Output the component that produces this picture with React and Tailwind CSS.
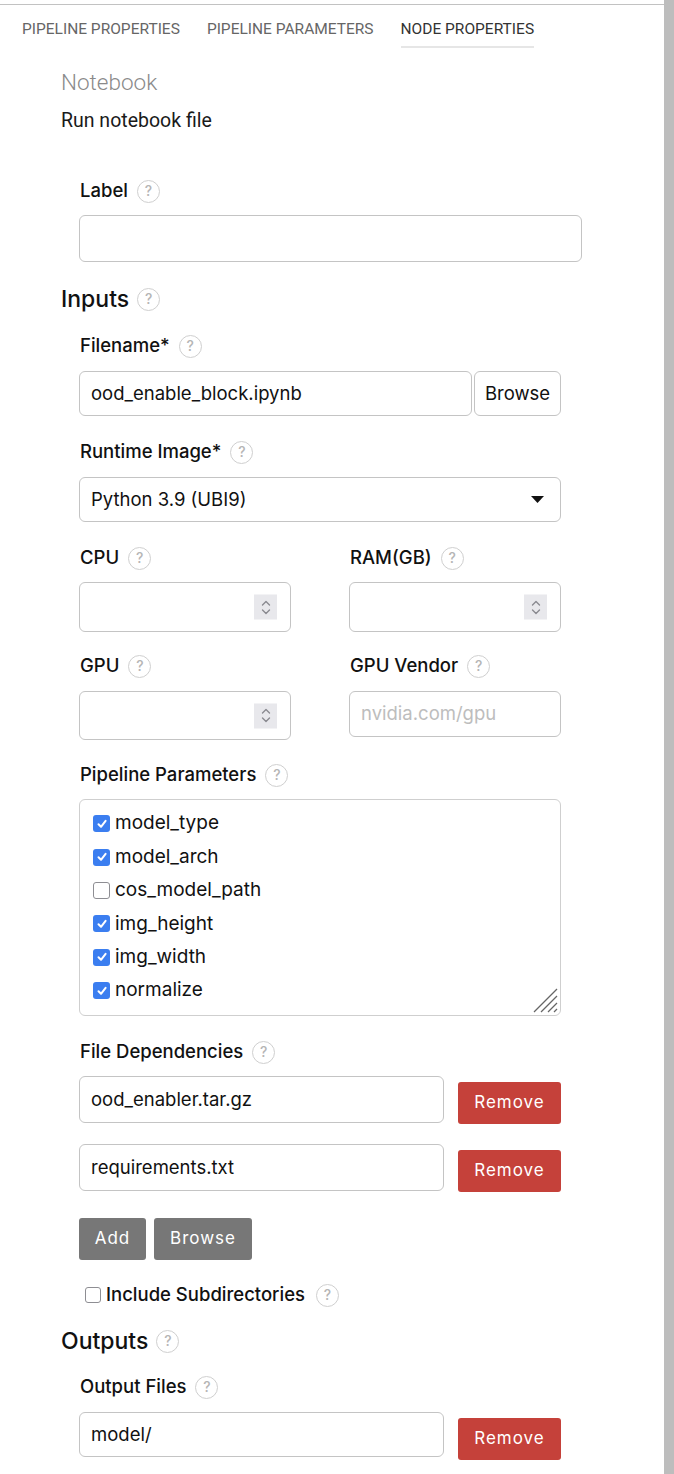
import React from "react";

const sf = { fontFamily: "Inter, 'Noto Sans', sans-serif" };

function Help({ className = "" }) {
  return (
    <span
      className={`inline-flex items-center justify-center w-[23px] h-[23px] rounded-full border border-[#cfcfcf] text-[#b5b5b5] text-[14px] leading-none ${className}`}
      style={sf}
    >
      ?
    </span>
  );
}

function Label({ children, className = "" }) {
  return (
    <div className={`flex items-center h-[24px] text-[18.5px] font-medium text-[#111] ${className}`} style={sf}>
      <span>{children}</span>
      <Help className="ml-[9px]" />
    </div>
  );
}

function Spinner() {
  return (
    <span className="absolute right-[13px] top-1/2 -translate-y-1/2 w-[23px] h-[25px] bg-[#e8e8ec] flex items-center justify-center">
      <svg width="12" height="18" viewBox="0 0 12 18" fill="none" stroke="#8a8a90" strokeWidth="1.4" strokeLinecap="round" strokeLinejoin="round">
        <path d="M2.5 6.5 L6 3 L9.5 6.5" />
        <path d="M2.5 11.5 L6 15 L9.5 11.5" />
      </svg>
    </span>
  );
}

function NumInput({ h = "h-[50px]" }) {
  return <div className={`relative w-[212px] ${h} rounded-[6px] border border-[#c4c4c4] bg-white`}><Spinner /></div>;
}

function TextBox({ value, className = "" }) {
  return (
    <div
      className={`flex items-center px-[11px] rounded-[6px] border border-[#c4c4c4] bg-white text-[18.5px] text-[#111] ${className}`}
      style={sf}
    >
      {value}
    </div>
  );
}

function RedBtn() {
  return (
    <div
      className="w-[103px] h-[42px] rounded-[3px] bg-[#c5413a] text-white text-[17px] tracking-[1px] flex items-center justify-center"
      style={sf}
    >
      Remove
    </div>
  );
}

function Check({ checked }) {
  if (checked) {
    return (
      <span className="w-[17px] h-[17px] rounded-[3px] bg-[#3b7ef0] flex items-center justify-center shrink-0">
        <svg width="12" height="12" viewBox="0 0 12 12" fill="none" stroke="white" strokeWidth="2" strokeLinecap="round" strokeLinejoin="round">
          <path d="M2.5 6.3 L5 8.8 L9.6 2.8" />
        </svg>
      </span>
    );
  }
  return <span className="w-[17px] h-[17px] rounded-[3px] border-[1.5px] border-[#8e8e93] bg-white shrink-0" />;
}

const params = [
  ["model_type", true],
  ["model_arch", true],
  ["cos_model_path", false],
  ["img_height", true],
  ["img_width", true],
  ["normalize", true],
];

export default function App() {
  return (
    <div className="w-[674px] h-[1474px] flex bg-white overflow-hidden">
      <div className="w-[664px] h-full">
        <div className="mt-[4px] border-t border-[#c2c2c2]" />
        {/* tabs */}
        <div className="flex gap-[27px] pl-[22px] pt-[14px] text-[15.5px] leading-[20px]" style={{ fontFamily: "Roboto, sans-serif" }}>
          <div className="pb-[9px] text-[#666]">PIPELINE PROPERTIES</div>
          <div className="pb-[9px] text-[#666]">PIPELINE PARAMETERS</div>
          <div className="pb-[7px] border-b-2 border-[#e6e6e6] text-[#333]">NODE PROPERTIES</div>
        </div>

        <div className="pl-[61px]">
          <div className="mt-[20px] text-[22.5px] leading-[28px] font-light text-[#8a8a8a]" style={{ fontFamily: "Roboto, sans-serif" }}>
            Notebook
          </div>
          <div className="mt-[13px] text-[19.5px] leading-[24px] text-[#1a1a1a]" style={{ fontFamily: "Roboto, sans-serif" }}>
            Run notebook file
          </div>

          <div className="pl-[19px] mt-[46px]">
            <Label>Label</Label>
          </div>
          <div className="pl-[18px] mt-[12px]">
            <TextBox value="" className="w-[503px] h-[47px]" />
          </div>

          <div className="mt-[23px] flex items-center h-[28px] text-[23px] font-medium text-[#111]" style={sf}>
            <span>Inputs</span>
            <Help className="ml-[8px]" />
          </div>

          <div className="pl-[18px]">
            <div className="pl-[1px] mt-[21px]">
              <Label>Filename*</Label>
            </div>
            <div className="mt-[13px] flex w-[482px] h-[45px]">
              <TextBox value="ood_enable_block.ipynb" className="flex-1 h-full" />
              <div className="ml-[2px] w-[87px] h-full rounded-[6px] border border-[#c4c4c4] flex items-center justify-center text-[18.5px] text-[#111]" style={sf}>
                Browse
              </div>
            </div>

            <div className="pl-[1px] mt-[24px]">
              <Label>Runtime Image*</Label>
            </div>
            <div className="mt-[13px] w-[482px] h-[45px] rounded-[6px] border border-[#c4c4c4] flex items-center justify-between pl-[11px] pr-[16px] text-[18.5px] text-[#111]" style={sf}>
              <span>Python 3.9 (UBI9)</span>
              <svg width="13" height="7" viewBox="0 0 13 7"><path d="M0 0 H13 L6.5 7 Z" fill="#111" /></svg>
            </div>

            <div className="mt-[24px] flex gap-[58px] w-[482px]">
              <div className="w-[212px]">
                <div className="pl-[1px]"><Label>CPU</Label></div>
                <div className="mt-[12px]"><NumInput /></div>
              </div>
              <div className="w-[212px]">
                <div className="pl-[1px]"><Label>RAM(GB)</Label></div>
                <div className="mt-[12px]"><NumInput /></div>
              </div>
            </div>

            <div className="mt-[22px] flex gap-[58px] w-[482px]">
              <div className="w-[212px]">
                <div className="pl-[1px]"><Label>GPU</Label></div>
                <div className="mt-[13px]"><NumInput h="h-[49px]" /></div>
              </div>
              <div className="w-[212px]">
                <div className="pl-[1px]"><Label>GPU Vendor</Label></div>
                <div className="mt-[13px]">
                  <TextBox value={<span className="text-[#bdbdbd]">nvidia.com/gpu</span>} className="w-[212px] h-[46px]" />
                </div>
              </div>
            </div>

            <div className="pl-[1px] mt-[23px]">
              <Label>Pipeline Parameters</Label>
            </div>
            <div className="relative mt-[12px] w-[482px] h-[217px] rounded-[6px] border border-[#cfcfcf] pl-[13px] pt-[7px]" style={sf}>
              {params.map(([name, c]) => (
                <div key={name} className="h-[33.4px] flex items-center gap-[5px] text-[19px] text-[#111]">
                  <Check checked={c} />
                  <span>{name}</span>
                </div>
              ))}
              <svg className="absolute right-[2px] bottom-[2px]" width="26" height="26" viewBox="0 0 26 26" stroke="#666" strokeWidth="1.3">
                <path d="M2 25 L25 2" />
                <path d="M9 25 L25 9" />
                <path d="M16 25 L25 16" />
                <path d="M22 25 L25 22" />
              </svg>
            </div>

            <div className="pl-[1px] mt-[24px]">
              <Label>File Dependencies</Label>
            </div>
            <div className="mt-[12px] flex items-end gap-[14px]">
              <TextBox value="ood_enabler.tar.gz" className="w-[365px] h-[47px]" />
              <div className="mb-[-1px]"><RedBtn /></div>
            </div>
            <div className="mt-[21px] flex items-end gap-[14px]">
              <TextBox value="requirements.txt" className="w-[365px] h-[47px]" />
              <div className="mb-[-1px]"><RedBtn /></div>
            </div>
            <div className="mt-[27px] flex gap-[8px]" style={sf}>
              <div className="w-[67px] h-[42px] rounded-[3px] bg-[#777] text-white text-[17px] tracking-[1px] flex items-center justify-center">Add</div>
              <div className="w-[98px] h-[42px] rounded-[3px] bg-[#777] text-white text-[17px] tracking-[1px] flex items-center justify-center">Browse</div>
            </div>
            <div className="mt-[23px] pl-[6px] flex items-center h-[24px] text-[18.5px] font-medium text-[#111]" style={sf}>
              <span className="w-[16px] h-[16px] rounded-[3px] border-[1.5px] border-[#8e8e93] bg-white" />
              <span className="ml-[5px]">Include Subdirectories</span>
              <Help className="ml-[11px]" />
            </div>
          </div>

          <div className="mt-[20px] flex items-center h-[28px] text-[23px] font-medium text-[#111]" style={sf}>
            <span>Outputs</span>
            <Help className="ml-[8px]" />
          </div>
          <div className="pl-[18px]">
            <div className="pl-[1px] mt-[20px]">
              <Label>Output Files</Label>
            </div>
            <div className="mt-[13px] flex items-end gap-[14px]">
              <TextBox value="model/" className="w-[365px] h-[45px]" />
              <div className="mb-[-3px]"><RedBtn /></div>
            </div>
          </div>
        </div>
      </div>
      <div className="w-[10px] h-full bg-[#bdbdbd]" />
    </div>
  );
}
